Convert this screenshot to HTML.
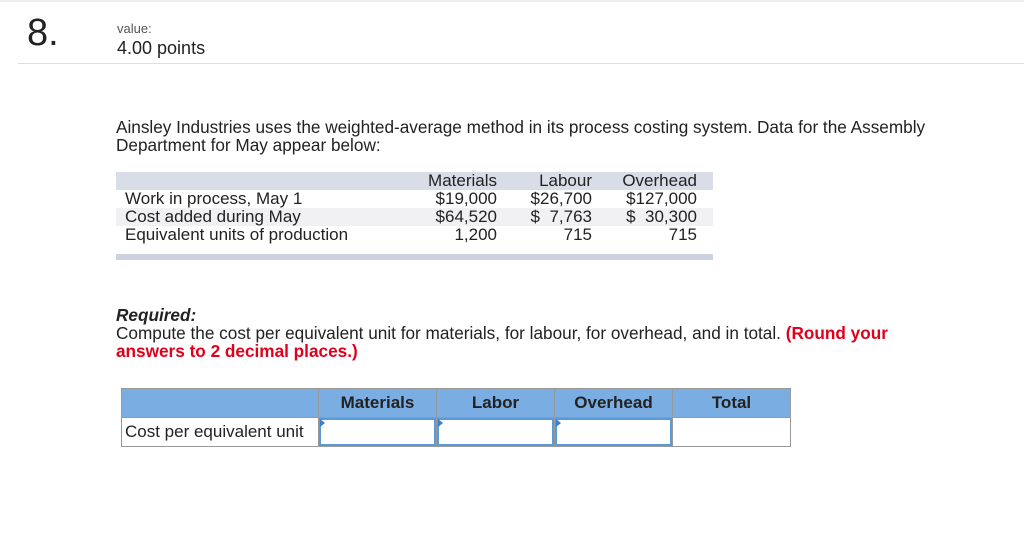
<!DOCTYPE html>
<html><head><style>
body{margin:0;width:1024px;height:552px;background:#fff;font-family:"Liberation Sans",Arial,sans-serif;position:relative;overflow:hidden;color:#222}
.a{position:absolute;white-space:nowrap}
.dt{position:absolute;left:116px;width:597px;font-size:17px;color:#222}
.r{position:absolute;left:0;width:597px;height:18px;line-height:18px}
.c{position:absolute;text-align:right}
table{position:absolute;left:121px;top:388px;border-collapse:collapse;font-size:17px}
td{border:1px solid #999;padding:0}
</style></head><body>
<div class="a" style="left:0;top:0;width:1024px;height:2px;background:#eee"></div>
<div class="a" style="left:27px;top:12px;font-size:38px;color:#222">8.</div>
<div class="a" style="left:117px;top:21px;font-size:13px;color:#555">value:</div>
<div class="a" style="left:117px;top:38px;font-size:18px;color:#222">4.00 points</div>
<div class="a" style="left:18px;top:63px;width:1006px;height:1px;background:#ddd"></div>
<div class="a" style="left:116px;top:118px;font-size:17.2px;line-height:18px">Ainsley Industries uses the weighted-average method in its process costing system. Data for the Assembly<br>Department for May appear below:</div>
<div class="dt" style="top:172px">
<div class="r" style="top:0;background:#d9dde8"></div>
<div class="r" style="top:36px;background:#f1f1f3"></div>
<div class="r" style="top:18px;padding-left:9px">Work in process, May 1</div>
<div class="r" style="top:36px;padding-left:9px">Cost added during May</div>
<div class="r" style="top:54px;padding-left:9px">Equivalent units of production</div>
<div class="c" style="right:216px;top:0;line-height:18px">Materials<br>$19,000<br>$64,520<br>1,200</div>
<div class="c" style="right:121px;top:0;line-height:18px">Labour<br>$26,700<br>$&nbsp;&nbsp;7,763<br>715</div>
<div class="c" style="right:16px;top:0;line-height:18px">Overhead<br>$127,000<br>$&nbsp;&nbsp;30,300<br>715</div>
<div class="r" style="top:82px;height:6px;background:#ccd2e0"></div>
</div>
<div class="a" style="left:116px;top:306px;font-size:17.2px;line-height:18px"><b><i>Required:</i></b><br>Compute the cost per equivalent unit for materials, for labour, for overhead, and in total. <b style="color:#e0001b">(Round your<br>answers to 2 decimal places.)</b></div>
<table>
<tr style="background:#7aaee2;height:29px;font-weight:bold;text-align:center"><td style="width:196px"></td><td style="width:117px">Materials</td><td style="width:117px">Labor</td><td style="width:117px">Overhead</td><td style="width:117px">Total</td></tr>
<tr style="height:29px"><td style="padding-left:3px">Cost per equivalent unit</td>
<td style="box-shadow:inset 0 0 0 2px #5b9ad8;position:relative"><span style="position:absolute;left:1px;top:1px;border-left:5px solid #3a7fd0;border-top:4px solid transparent;border-bottom:4px solid transparent"></span></td>
<td style="box-shadow:inset 0 0 0 2px #5b9ad8;position:relative"><span style="position:absolute;left:1px;top:1px;border-left:5px solid #3a7fd0;border-top:4px solid transparent;border-bottom:4px solid transparent"></span></td>
<td style="box-shadow:inset 0 0 0 2px #5b9ad8;position:relative"><span style="position:absolute;left:1px;top:1px;border-left:5px solid #3a7fd0;border-top:4px solid transparent;border-bottom:4px solid transparent"></span></td>
<td></td></tr>
</table>
</body></html>
